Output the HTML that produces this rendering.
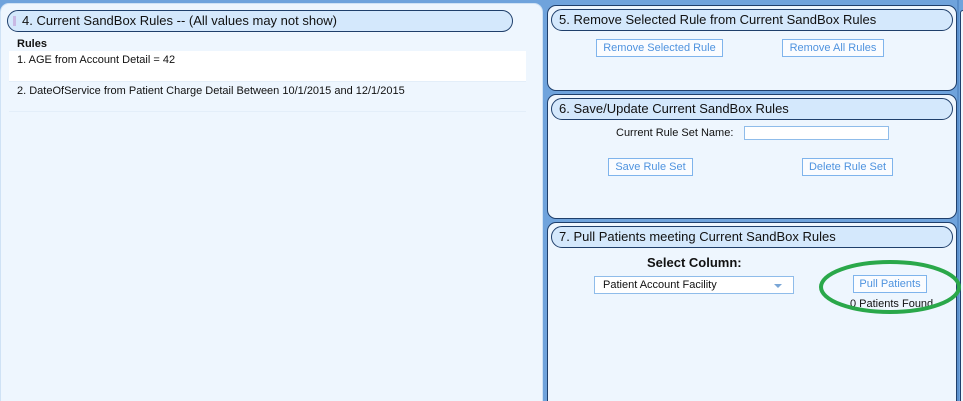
<!DOCTYPE html>
<html style="overflow:hidden;height:401px"><head><style>
*{box-sizing:border-box;margin:0;padding:0}
body{width:963px;height:401px;background:#6fa3dc;position:relative;overflow:hidden;font-family:"Liberation Sans",Arial,sans-serif;}
.p{position:absolute;background:#eef6fe;border-radius:9px}
.l{left:0;top:3px;width:543px;height:398px;border:1px solid #cfe2f5;border-bottom:none;border-radius:9px 9px 0 0}
.r{border:1px solid #1f3f6b;left:547px;width:410px}
.h{position:absolute;height:22px;background:#d4e8fc;border:1px solid #1f3f6b;border-radius:11px;font-size:13px;color:#111;line-height:20px;padding-left:7px;white-space:nowrap}
.btn{position:absolute;height:18px;border:1px solid #7fb4ec;background:#fafcff;color:#4f93df;font-size:11px;line-height:16px;text-align:center}
.t{position:absolute;font-size:11px;color:#111;white-space:nowrap}
</style></head><body>
<div class="p l">
  <div class="h" style="left:6px;top:6px;width:506px;padding-left:14px;"><span style="position:absolute;left:5px;top:5px;width:3px;height:10px;background:#c9b9e4"></span>4. Current SandBox Rules -- (All values may not show)</div>
  <div class="t" style="left:16px;top:34px;font-weight:bold">Rules</div>
  <div style="position:absolute;left:8px;top:47px;width:517px;height:30px;background:#fff"></div>
  <div class="t" style="left:16px;top:50px">1. AGE from Account Detail = 42</div>
  <div style="position:absolute;left:8px;top:77px;width:517px;height:1px;background:#e3eef9"></div>
  <div class="t" style="left:16px;top:81px">2. DateOfService from Patient Charge Detail Between 10/1/2015 and 12/1/2015</div>
  <div style="position:absolute;left:8px;top:107px;width:517px;height:1px;background:#e3eef9"></div>
</div>
<div class="p r" style="top:5px;height:86px">
  <div class="h" style="left:3px;top:3px;width:402px;">5. Remove Selected Rule from Current SandBox Rules</div>
  <div class="btn" style="left:48px;top:33px;width:127px">Remove Selected Rule</div>
  <div class="btn" style="left:234px;top:33px;width:102px">Remove All Rules</div>
</div>
<div class="p r" style="top:94px;height:125px">
  <div class="h" style="left:3px;top:3px;width:402px;">6. Save/Update Current SandBox Rules</div>
  <div class="t" style="left:68px;top:32px">Current Rule Set Name:</div>
  <div style="position:absolute;left:196px;top:31px;width:145px;height:14px;background:#fff;border:1px solid #8fbcea"></div>
  <div class="btn" style="left:60px;top:63px;width:85px">Save Rule Set</div>
  <div class="btn" style="left:254px;top:63px;width:91px">Delete Rule Set</div>
</div>
<div class="p r" style="top:222px;height:179px;border-bottom:none;border-radius:9px 9px 0 0">
  <div class="h" style="left:3px;top:3px;width:402px;">7. Pull Patients meeting Current SandBox Rules</div>
  <div class="t" style="left:99px;top:32px;font-size:13px;font-weight:bold">Select Column:</div>
  <div style="position:absolute;left:46px;top:53px;width:200px;height:18px;background:#fff;border:1px solid #8fbcea;font-size:11px;line-height:16px;padding-left:8px;color:#111">Patient Account Facility<span style="position:absolute;right:11px;top:7px;border-left:4px solid transparent;border-right:4px solid transparent;border-top:4px solid #7aa6d6"></span></div>
  <div class="btn" style="left:305px;top:52px;width:74px">Pull Patients</div>
  <div class="t" style="left:302px;top:75px">0 Patients Found</div>
</div>
<div style="position:absolute;left:957px;top:0;width:2px;height:401px;background:#5a8fcb"></div>
<div style="position:absolute;left:960px;top:10px;width:6px;height:391px;background:#eef6fe;border:1px solid #1f3f6b;border-bottom:none;border-radius:6px 6px 0 0"></div>
<svg style="position:absolute;left:818px;top:258px" width="145" height="60"><ellipse cx="72" cy="29" rx="69" ry="25" fill="none" stroke="#2aa84a" stroke-width="4"/></svg>
</body></html>
